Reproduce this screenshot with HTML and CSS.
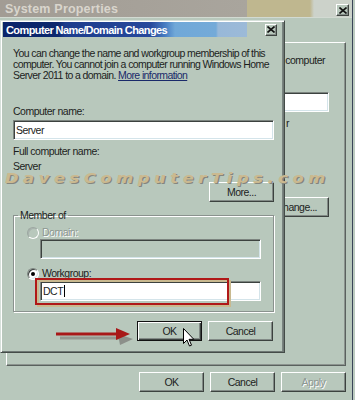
FILE: index.html
```html
<!DOCTYPE html>
<html>
<head>
<meta charset="utf-8">
<link rel="stylesheet" href="styles.css">
</head>
<body>
<div class="desk">
  <div class="outer">
    <div class="otitle">
      <span class="otext">System Properties</span>
      <span class="xbtn"><svg width="8" height="7" viewBox="0 0 8 7"><path d="M0.5 0.5 L7.5 6.5 M7.5 0.5 L0.5 6.5" stroke="#111" stroke-width="1.6"/></svg></span>
    </div>
    <div class="panel">
      <div class="pcol">
        <div class="ptext">computer</div>
        <div class="tb ptb"></div>
        <div class="ptext2">r</div>
        <div class="btn pbtn">Change...</div>
      </div>
    </div>
    <div class="obtns">
      <div class="btn">OK</div>
      <div class="btn">Cancel</div>
      <div class="btn dis">Apply</div>
    </div>
  </div>

  <div class="dialog">
    <div class="dtitle">
      <span>Computer Name/Domain Changes</span>
      <span class="xbtn small"><svg width="8" height="7" viewBox="0 0 8 7"><path d="M0.5 0.5 L7.5 6.5 M7.5 0.5 L0.5 6.5" stroke="#111" stroke-width="1.6"/></svg></span>
    </div>
    <div class="dbody">
      <p class="intro">You can change the name and workgroup membership of this<br>computer. You cannot join a computer running Windows Home<br>Server 2011 to a domain. <a class="link">More information</a></p>
      <div class="line l1">Computer name:</div>
      <div class="tb tbname">Server</div>
      <div class="line l2">Full computer name:</div>
      <div class="line l3">Server</div>
      <div class="btn more">More...</div>
      <fieldset class="group">
        <legend>Member of</legend>
        <div class="gin">
          <div class="rrow"><span class="radio off"></span><span class="rl dis">Domain:</span></div>
          <div class="tb tbdis"></div>
          <div class="rrow r2"><span class="radio on"></span><span class="rl">Workgroup:</span></div>
          <div class="tb tbwg">DCT<span class="caret"></span></div>
        </div>
      </fieldset>
      <div class="dbtns">
        <div class="btn def">OK</div>
        <div class="btn">Cancel</div>
      </div>
    </div>
  </div>

  <div class="watermark">DavesComputerTips.com</div>
  <div class="hilite"></div>
  <svg class="arrow" width="90" height="26" viewBox="0 0 90 26">
    <rect x="10" y="12.5" width="60" height="3" fill="#949890"/>
    <polygon points="68,10 83,15 70,21" fill="#8c908a"/>
    <rect x="6" y="8.5" width="62" height="3" fill="#a81818"/>
    <polygon points="66,4 80,10 66,16" fill="#a81818"/>
  </svg>
  <svg class="cursor" width="14" height="21" viewBox="0 0 14 21">
    <path d="M0.5 0.5 L0.5 15.5 L4 12 L6.5 18 L8.5 17.2 L6 11.3 L10.8 11.3 Z" fill="#fff" stroke="#000" stroke-width="1" stroke-linejoin="miter"/>
  </svg>
</div>
</body>
</html>
```

FILE: styles.css
```css
* { box-sizing: border-box; }
html, body { margin: 0; padding: 0; }
body {
  background: #b8c8bc;
  font-family: "Liberation Sans", Arial, sans-serif;
  font-size: 10.5px;
  letter-spacing: -0.5px;
  color: #1c1e1c;
}
.desk {
  position: relative;
  width: 355px;
  height: 400px;
  overflow: hidden;
  background: #bccbc0;
}

/* outer window */
.outer {
  position: absolute;
  left: 0;
  top: 0;
  width: 353px;
  height: 400px;
  background: #b8c8bc;
  border-right: 1px solid #3a4458;
  display: flex;
  flex-direction: column;
}
.otitle {
  height: 18px;
  flex: none;
  border-bottom: 1px solid #d2dad2;
  display: flex;
  align-items: flex-start;
  justify-content: space-between;
  padding: 0 3px 0 5px;
  background: linear-gradient(to right, #a29c94 0, #a9a59d 247px, #bfb78f 247px, #bfb78f 310px, #ccd2ca 314px);
}
.otext {
  font-weight: bold;
  font-size: 12.5px;
  color: #d9d5cd;
  line-height: 13px;
  margin-top: 3px;
  letter-spacing: 0.2px;
}
.xbtn {
  width: 13px;
  height: 12px;
  margin-top: 4px;
  background: #b8c8bc;
  border: 1px solid;
  border-color: #fff #3e4440 #3e4440 #fff;
  box-shadow: inset -1px -1px 0 #848c88;
  display: flex;
  align-items: center;
  justify-content: center;
}
.xbtn.small {
  width: 12px;
  margin-top: 0;
}

.panel {
  margin: 24px 0 0 6px;
  width: 340px;
  height: 324px;
  flex: none;
  border: 1px solid;
  border-color: #fff #5a625e #5a625e #fff;
  box-shadow: inset -1px -1px 0 #8c948f;
}
.pcol {
  display: flex;
  flex-direction: column;
  align-items: flex-end;
  padding: 12px 16px 0 0;
}
.ptext { line-height: 11px; margin-right: 4px; white-space: nowrap; }
.ptb { width: 200px; height: 17px; margin-top: 26px; }
.ptext2 { line-height: 11px; margin-top: 6px; margin-right: 40px; }
.pbtn { width: 75px; height: 19px; margin-top: 68px; }

.obtns {
  display: flex;
  justify-content: flex-end;
  gap: 6px;
  padding-right: 6px;
  margin-top: 6px;
}

/* buttons */
.btn {
  width: 65px;
  height: 20px;
  background: #b8c8bc;
  border: 1px solid;
  border-color: #fff #3c423f #3c423f #fff;
  box-shadow: inset -1px -1px 0 #828a86;
  display: flex;
  align-items: center;
  justify-content: center;
  line-height: 11px;
  color: #1c1e1c;
}
.btn.dis, .dis {
  color: #8d9792;
  text-shadow: 1px 1px 0 #fff;
}
.btn.def {
  border: 1px solid #111;
  box-shadow: inset 1px 1px 0 #fff, inset -1px -1px 0 #3c423f, inset -2px -2px 0 #828a86;
}

/* dialog */
.dialog {
  position: absolute;
  left: 0;
  top: 20px;
  width: 285px;
  height: 333px;
  background: #b8c8bc;
  border: 1px solid;
  border-color: #d6e0da #444c48 #444c48 #d6e0da;
  box-shadow: inset 1px 1px 0 #fff, inset -1px -1px 0 #6e7874, inset -2px 0 0 #7a8480;
  padding: 1px 2px 2px 2px;
  display: flex;
  flex-direction: column;
}
.dtitle {
  height: 15px;
  flex: none;
  display: flex;
  align-items: center;
  justify-content: space-between;
  padding: 0 5px 0 3px;
  color: #fff;
  font-weight: bold;
  font-size: 11px;
  letter-spacing: -0.6px;
  background: linear-gradient(to right, #0a246a 0, #0c276e 55px, #1c3c8c 62px, #27499c 148px, #4a80c4 163px, #70a8d8 172px, #74aad8 213px, #98b8d8 215px, #9cbad8 244px, transparent 244px);
}
.dbody {
  padding: 11px 8px 0 10px;
  display: flex;
  flex-direction: column;
  flex: 1;
}
.intro {
  margin: 0;
  line-height: 11px;
  letter-spacing: -0.6px;
  white-space: nowrap;
}
.link {
  color: #1a2a6a;
  text-decoration: underline;
}
.line { line-height: 11px; }
.l1 { margin-top: 25px; }
.l2 { margin-top: 6px; }
.l3 { margin-top: 4px; }

.tb {
  height: 20px;
  background: #fff;
  border: 1px solid;
  border-color: #7c847f #fff #fff #7c847f;
  box-shadow: inset 1px 1px 0 #3c423f, inset -1px -1px 0 #d4e4ea;
  padding: 0 2px;
  line-height: 18px;
  white-space: nowrap;
}
.tbname { margin-top: 3px; }
.more { align-self: flex-end; margin-top: 10px; }

.group {
  margin: 8px 0 0 0;
  padding: 0;
  border: 1px solid #8a928e;
  box-shadow: 1px 1px 0 #fff, inset 1px 1px 0 #fff;
  height: 102px;
  min-width: 0;
}
.group legend {
  padding: 0 2px;
  margin-left: 4px;
  line-height: 11px;
}
.gin {
  padding: 5px 0 0 13px;
  display: flex;
  flex-direction: column;
}
.rrow {
  height: 13px;
  display: flex;
  align-items: center;
  gap: 3px;
}
.r2 { margin-top: 8px; }
.radio {
  width: 12px;
  height: 12px;
  border-radius: 50%;
  border: 1px solid;
  border-color: #7c847f #fff #fff #7c847f;
  box-shadow: inset 1px 1px 0 #3c423f, inset -1px -1px 0 #d4e4ea;
  background: #fff;
  display: flex;
  align-items: center;
  justify-content: center;
}
.radio.off {
  background: #b8c8bc;
  border-color: #9ca6a1 #fff #fff #9ca6a1;
  box-shadow: inset 1px 1px 0 #a8b2ad;
}
.radio.on::after {
  content: "";
  width: 4px;
  height: 4px;
  border-radius: 50%;
  background: #000;
}
.rl { line-height: 11px; }
.tbdis {
  width: 221px;
  margin-left: 13px;
  background: #b8c8bc;
}
.tbwg {
  width: 221px;
  margin-left: 13px;
  margin-top: 1px;
  display: flex;
  align-items: center;
}
.caret {
  width: 1px;
  height: 12px;
  background: #000;
  margin-left: 1px;
}
.dbtns {
  margin-top: 9px;
  display: flex;
  justify-content: flex-end;
  gap: 6px;
  padding-right: 1px;
}

/* overlays */
.watermark {
  position: absolute;
  left: 5px;
  top: 170px;
  font-family: "DejaVu Sans", sans-serif;
  font-weight: bold;
  font-style: italic;
  font-size: 14px;
  line-height: 16px;
  letter-spacing: 4px;
  color: #cbb98f;
  text-shadow: 1px 1px 0 #85867e;
  transform: scaleX(1.16);
  transform-origin: left center;
  white-space: nowrap;
}
.hilite {
  position: absolute;
  left: 35px;
  top: 278px;
  width: 194px;
  height: 27px;
  border: 2px solid #b01818;
  box-shadow: 2px 2px 0 #c9b98f, inset 2px 2px 0 #c9b98f;
}
.arrow {
  position: absolute;
  left: 50px;
  top: 324px;
}
.cursor {
  position: absolute;
  left: 183px;
  top: 328px;
}
```
